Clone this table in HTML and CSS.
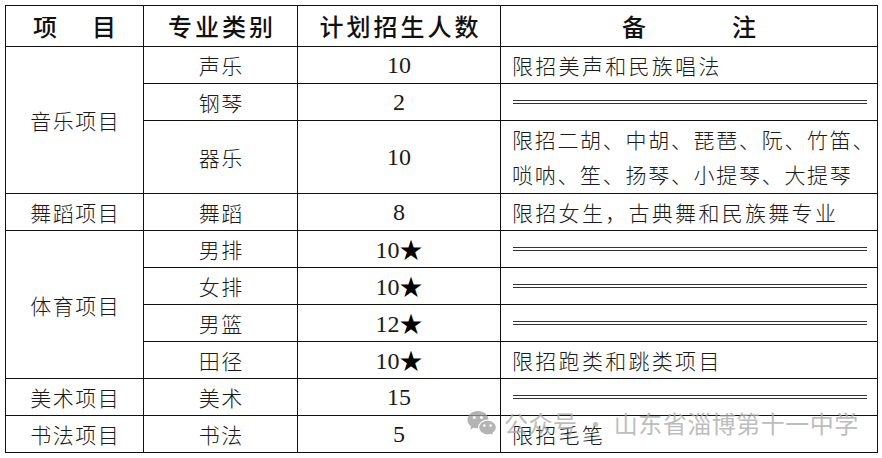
FILE: index.html
```html
<!DOCTYPE html>
<html lang="zh-CN">
<head>
<meta charset="utf-8">
<title>招生计划</title>
<link rel="stylesheet" href="styles.css">
</head>
<body>
<div class="page">
  <table class="plan">
    <colgroup>
      <col class="c1"><col class="c2"><col class="c3"><col class="c4">
    </colgroup>
    <thead>
      <tr class="head">
        <th><span class="spread narrow"><span>项</span><span>目</span></span></th>
        <th class="sp">专业类别</th>
        <th class="sp">计划招生人数</th>
        <th><span class="spread wide"><span>备</span><span>注</span></span></th>
      </tr>
    </thead>
    <tbody>
      <tr>
        <td rowspan="3">音乐项目</td>
        <td>声乐</td>
        <td class="num">10</td>
        <td class="note">限招美声和民族唱法</td>
      </tr>
      <tr>
        <td>钢琴</td>
        <td class="num">2</td>
        <td class="note"><div class="dash"></div></td>
      </tr>
      <tr class="tall">
        <td>器乐</td>
        <td class="num">10</td>
        <td class="note two">限招二胡、中胡、琵琶、阮、竹笛、<br>唢呐、笙、扬琴、小提琴、大提琴</td>
      </tr>
      <tr>
        <td>舞蹈项目</td>
        <td>舞蹈</td>
        <td class="num">8</td>
        <td class="note">限招女生，古典舞和民族舞专业</td>
      </tr>
      <tr>
        <td rowspan="4">体育项目</td>
        <td>男排</td>
        <td class="num">10<span class="star">★</span></td>
        <td class="note"><div class="dash"></div></td>
      </tr>
      <tr>
        <td>女排</td>
        <td class="num">10<span class="star">★</span></td>
        <td class="note"><div class="dash"></div></td>
      </tr>
      <tr>
        <td>男篮</td>
        <td class="num">12<span class="star">★</span></td>
        <td class="note"><div class="dash"></div></td>
      </tr>
      <tr>
        <td>田径</td>
        <td class="num">10<span class="star">★</span></td>
        <td class="note">限招跑类和跳类项目</td>
      </tr>
      <tr>
        <td>美术项目</td>
        <td>美术</td>
        <td class="num">15</td>
        <td class="note"><div class="dash"></div></td>
      </tr>
      <tr>
        <td>书法项目</td>
        <td>书法</td>
        <td class="num">5</td>
        <td class="note">限招毛笔</td>
      </tr>
    </tbody>
  </table>

  <div class="watermark">
    <svg class="wx" viewBox="0 0 30 27" width="30" height="27" aria-hidden="true">
      <path d="M11 1C5 1 0.5 4.9 0.5 9.8c0 2.7 1.4 5 3.6 6.6L3.2 19.6l3.6-1.9c1.3.4 2.7.6 4.2.6 6 0 10.5-3.9 10.5-8.6S17 1 11 1z" fill="#9c9c9c"/>
      <circle cx="7.3" cy="7.6" r="1.5" fill="#fff"/>
      <circle cx="14.4" cy="7.6" r="1.5" fill="#fff"/>
      <path d="M20.6 10.2c-5 0-9 3.3-9 7.4s4 7.4 9 7.4c1.1 0 2.2-.2 3.2-.5l3 1.6-.8-2.7c1.9-1.4 3.5-3.4 3.5-5.8 0-4.1-4-7.4-8.9-7.4z" fill="#9c9c9c" stroke="#fff" stroke-width="1.2"/>
      <circle cx="17.4" cy="15.6" r="1.3" fill="#fff"/>
      <circle cx="23.6" cy="15.6" r="1.3" fill="#fff"/>
    </svg>
    <span class="wm-text">公众号 · 山东省淄博第十一中学</span>
  </div>
</div>
</body>
</html>
```

FILE: styles.css
```css
html, body {
  margin: 0;
  padding: 0;
  background: #ffffff;
}

.page {
  position: relative;
  width: 882px;
  height: 458px;
  padding: 5px 0 0 5px;
  box-sizing: border-box;
  overflow: hidden;
}

.plan {
  border-collapse: collapse;
  table-layout: fixed;
  width: 872px;
  font-family: "Noto Sans CJK SC", "Noto Sans CJK JP", sans-serif;
  font-weight: 300;
  color: #1a1a1a;
}

.c1 { width: 138px; }
.c2 { width: 154px; }
.c3 { width: 203px; }
.c4 { width: 377px; }

.plan th,
.plan td {
  border: 1px solid #111;
  padding: 0;
  text-align: center;
  vertical-align: middle;
  white-space: nowrap;
}

.plan td {
  font-size: 21px;
  letter-spacing: 1.5px;
  line-height: 26px;
  text-indent: 1.5px;
}

.plan tbody tr { height: 37px; }
.plan tbody tr.tall { height: 73px; }

.head { height: 41px; }

.plan th {
  font-size: 24px;
  font-weight: 500;
  color: #111;
  line-height: 28px;
}

.plan th.sp {
  letter-spacing: 3px;
  text-indent: 3px;
}

.spread {
  display: inline-flex;
  justify-content: center;
}
.spread.narrow { gap: 35px; }
.spread.wide { gap: 86px; }

.plan td.num {
  font-family: "Liberation Serif", "Times New Roman", serif;
  font-weight: 400;
  font-size: 24px;
  letter-spacing: 0;
  text-indent: 0;
  color: #1a1a1a;
}

.star {
  font-family: "Noto Sans CJK SC", sans-serif;
  font-weight: 400;
  font-size: 23px;
  color: #000;
}

.plan td.note {
  text-align: left;
  padding-left: 11px;
  text-indent: 0;
  letter-spacing: 2.3px;
}

.plan td.note.two {
  letter-spacing: 1.7px;
  line-height: 35px;
}

.dash {
  height: 2px;
  border-top: 1px solid #333;
  border-bottom: 1px solid #333;
  margin: 0 10px 0 1px;
}

.watermark {
  position: absolute;
  left: 467px;
  top: 409px;
  display: flex;
  align-items: center;
  gap: 7px;
  opacity: 0.75;
}

.wx { display: block; }

.wm-text {
  font-family: "Noto Sans CJK SC", sans-serif;
  font-size: 24px;
  font-weight: 400;
  color: #a8a8a8;
  line-height: 28px;
  letter-spacing: 0.5px;
  white-space: nowrap;
}
```
